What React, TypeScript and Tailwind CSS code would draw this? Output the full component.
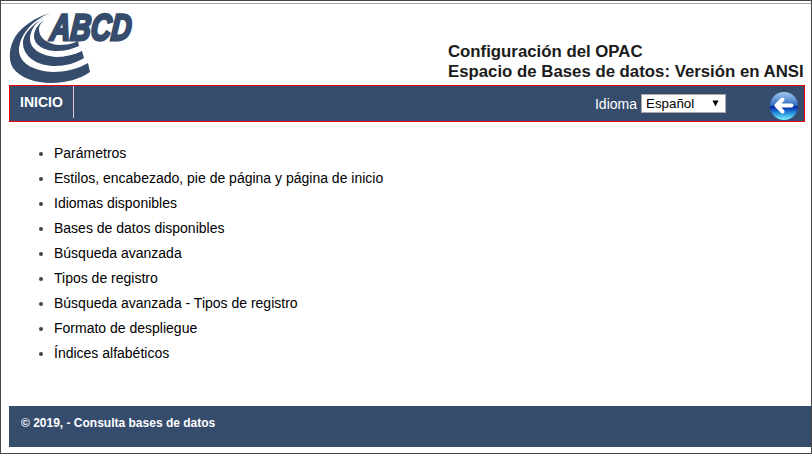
const items = [
  'Parámetros',
  'Estilos, encabezado, pie de página y página de inicio',
  'Idiomas disponibles',
  'Bases de datos disponibles',
  'Búsqueda avanzada',
  'Tipos de registro',
  'Búsqueda avanzada - Tipos de registro',
  'Formato de despliegue',
  'Índices alfabéticos',
];

function Logo() {
  return (
    <svg className="overflow-visible" width="128" height="76" viewBox="8 9 128 76" fill="#364c6c" aria-label="ABCD">
      <path d="M50 13C36 17 22 26 15 37C9 47 8 60 13 68C20 78 36 83 51 83C66 83 80 79 90 72L88 63C78 69 65 72 53 72C36 71 20 65 19 51C19 36 31 21 50 13Z" />
      <path d="M50 14C37 21 23 32 23 43C23 57 38 66 55 66C66 66 76 63 84 58L82 51C74 55 64 57 56 57C42 56 30 49 30 39C30 29 37 20 50 14Z" />
      <path d="M51 15C41 21 34 28 34 36C34 45 44 51 57 51C65 51 72 49 79 46L78 41C72 44 66 45 59 45C47 44 39 38 39 29C39 24 44 19 51 15Z" />
      <text
        transform="translate(49.5 39.8) skewX(-5)"
        fontFamily="'Liberation Sans', Arial, sans-serif"
        fontSize="37"
        fontWeight="700"
        fontStyle="italic"
        textLength="81"
        lengthAdjust="spacingAndGlyphs"
        stroke="#364c6c"
        strokeWidth="2.8"
      >
        ABCD
      </text>
    </svg>
  );
}

function BackIcon() {
  return (
    <svg width="30" height="30" viewBox="0 0 30 30">
      <defs>
        <linearGradient id="upper" x1="0" y1="0" x2="0" y2="1">
          <stop offset="0" stopColor="#a5caf0" />
          <stop offset="1" stopColor="#2a66bd" />
        </linearGradient>
        <linearGradient id="lower" x1="0" y1="0" x2="0" y2="1">
          <stop offset="0" stopColor="#0519a0" />
          <stop offset="0.45" stopColor="#1c83d8" />
          <stop offset="1" stopColor="#7df4ff" />
        </linearGradient>
      </defs>
      <path d="M1 15a14 14 0 0 1 28 0Z" fill="url(#upper)" />
      <path d="M1 15a14 14 0 0 0 28 0Z" fill="url(#lower)" />
      <path
        d="M13.5 8.5L7.5 14.5L13.5 20.5M8 14.5H22.5"
        fill="none"
        stroke="#fff"
        strokeWidth="4"
        strokeLinecap="round"
        strokeLinejoin="round"
      />
    </svg>
  );
}

export default function App() {
  return (
    <div className="flex h-[454px] w-[812px] flex-col overflow-hidden border border-[#464446] bg-white pl-2 font-['Liberation_Sans',Arial,sans-serif]">
      <div className="-ml-2 mt-[2px] h-px shrink-0 bg-[#aaa4aa]" />
      <header className="flex h-[81px] shrink-0 justify-between pr-[7px]">
        <div className="-ml-px mt-[5px]">
          <Logo />
        </div>
        <h1 className="mt-[38px] w-[356px] whitespace-nowrap text-[16.8px] font-bold leading-5 text-[#1b1b1b]">
          Configuración del OPAC
          <br />
          Espacio de Bases de datos: Versión en ANSI
        </h1>
      </header>
      <nav className="flex h-[37px] w-[796px] shrink-0 border border-[#f00000] bg-[#364c6c] text-sm text-white">
        <a className="h-8 w-16 border-r border-[#e8c8cc] pl-[10px] font-bold leading-8">INICIO</a>
        <div className="ml-auto flex h-[35px] items-center">
          <span className="mr-1">Idioma</span>
          <div className="flex h-[19px] w-[85px] items-center justify-between border border-[#a9a9a9] bg-white pl-1 pr-[6px] text-[13.333px] text-black">
            <span>Español</span>
            <svg width="7" height="7" viewBox="0 0 7 7">
              <path d="M0.5 0.5H6.5L3.5 6.5Z" />
            </svg>
          </div>
          <div className="ml-[43px] mr-[5px] mt-[5px]">
            <BackIcon />
          </div>
        </div>
      </nav>
      <ul className="mt-[19px] h-[265px] shrink-0 text-sm leading-[25px] text-black">
        {items.map((item) => (
          <li key={item} className="flex items-center">
            <span className="ml-[30px] mr-[11px] size-1 rounded-full bg-[#444]" />
            {item}
          </li>
        ))}
      </ul>
      <footer className="h-[41px] shrink-0 bg-[#364c6c] pl-3 pt-2 text-xs font-bold leading-[18px] text-white">
        © 2019, - Consulta bases de datos
      </footer>
    </div>
  );
}
